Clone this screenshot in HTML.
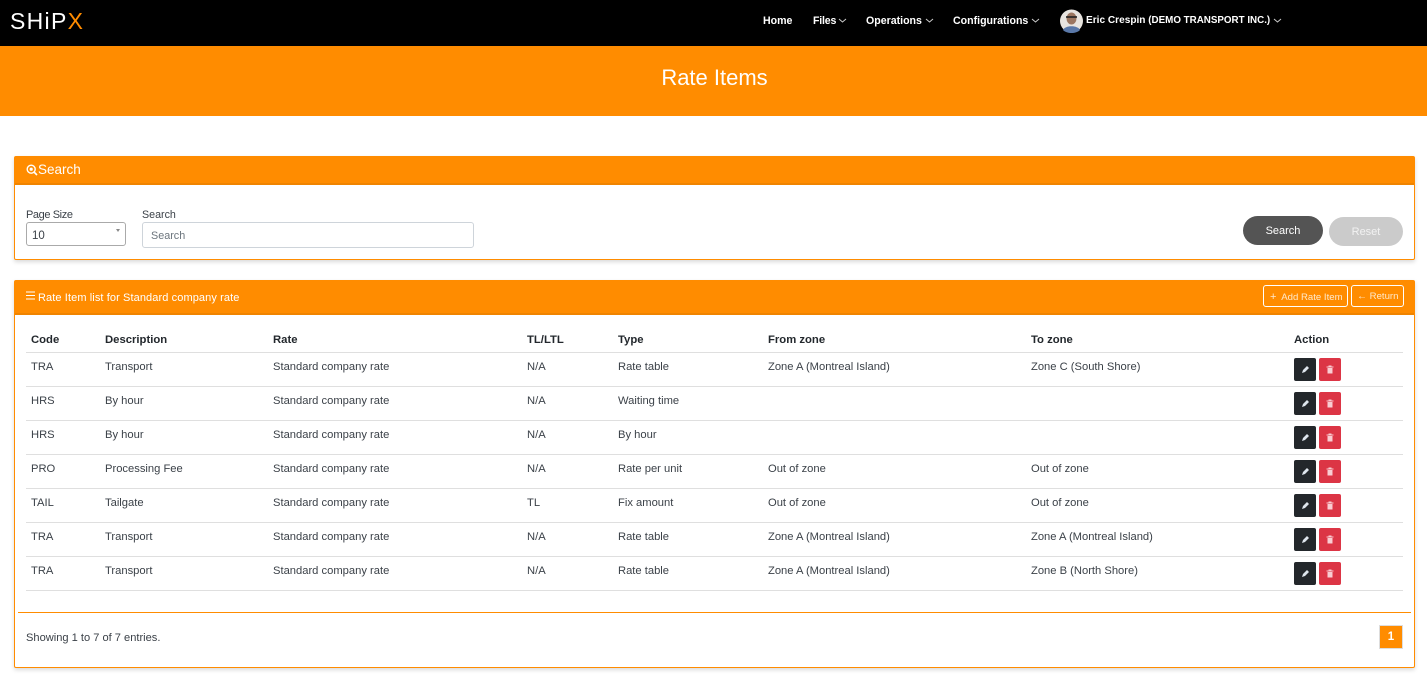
<!DOCTYPE html>
<html><head><meta charset="utf-8"><style>
*{box-sizing:border-box}
html,body{margin:0;padding:0;width:1427px;height:678px;overflow:hidden;background:#fff;font-family:"Liberation Sans",sans-serif;color:#333a40}
.a{position:absolute;white-space:nowrap}
.nav{font-size:10.6px;font-weight:700;color:#fff;top:14px;line-height:14px}
.chev{position:absolute;top:18px}
.card{position:absolute;left:14px;width:1401px;border:1px solid #ff8c00;border-radius:2px;box-shadow:0 2px 4px rgba(0,0,0,.15);background:#fff}
.hd{position:absolute;left:0;top:0;width:100%;background:#ff8c00;border-bottom:2px solid #f08400}
.t{font-size:11.2px;line-height:14px;color:#3b4148;margin-top:1px}
.h{font-size:11.3px;line-height:14px;font-weight:700;color:#23282d;margin-top:1px}
.line{position:absolute;left:26px;width:1377px;height:1px;background:#dfdfdf}
.ed,.del{position:absolute;width:22px;height:23px;border-radius:2px}
.ed{left:1294px;background:#23272b}
.del{left:1319px;background:#dc3545}
.ed svg,.del svg{position:absolute;left:6px;top:6px}
.ob{position:absolute;top:285px;height:22px;border:1px solid #fff;border-radius:3px;color:#ffe9cc;font-size:9.6px;line-height:22px;white-space:nowrap}
</style></head><body>
<div class="a" style="left:0;top:0;width:1427px;height:46px;background:#000"></div>
<div class="a" style="left:10px;top:9px;font-size:23px;line-height:24px;color:#fff;letter-spacing:1.3px">SHiP<span style="color:#ff8c00">X</span></div>
<div class="a nav" style="left:763px">Home</div>
<div class="a nav" style="left:813px;letter-spacing:-.2px">Files</div>
<svg class="chev" style="left:838px" width="9" height="5" viewBox="0 0 9 5"><path d="M1 1l3.500 3L8 1" fill="none" stroke="#ccc" stroke-width="1"/></svg>
<div class="a nav" style="left:866px">Operations</div>
<svg class="chev" style="left:925px" width="9" height="5" viewBox="0 0 9 5"><path d="M1 1l3.500 3L8 1" fill="none" stroke="#ccc" stroke-width="1"/></svg>
<div class="a nav" style="left:953px">Configurations</div>
<svg class="chev" style="left:1031px" width="9" height="5" viewBox="0 0 9 5"><path d="M1 1l3.500 3L8 1" fill="none" stroke="#ccc" stroke-width="1"/></svg>
<svg class="a" style="left:1060px;top:9px" width="23" height="24" viewBox="0 0 23 24"><circle cx="11.500" cy="12" r="11.500" fill="#e8e4df"/><ellipse cx="11.500" cy="9.500" rx="5" ry="6" fill="#9c7660"/><path d="M6 8h11" stroke="#222" stroke-width="1.600"/><path d="M3 21c2-5 15-5 17 0-4 4-13 4-17 0z" fill="#5a78a8"/></svg>
<div class="a nav" style="left:1086px;font-size:10.100px">Eric Crespin <span style="font-size:9.800px">(DEMO TRANSPORT INC.)</span></div>
<svg class="chev" style="left:1273px" width="9" height="5" viewBox="0 0 9 5"><path d="M1 1l3.500 3L8 1" fill="none" stroke="#ccc" stroke-width="1"/></svg>

<div class="a" style="left:0;top:46px;width:1427px;height:70px;background:#ff8c00"></div>
<div class="a" style="left:0;width:1429px;top:65px;text-align:center;font-size:22px;line-height:26px;color:#fff">Rate Items</div>

<div class="card" style="top:156px;height:104px"><div class="hd" style="height:28px"></div></div>
<svg class="a" style="left:26px;top:164px" width="12" height="12" viewBox="0 0 12 12"><circle cx="5.200" cy="5.200" r="4" fill="none" stroke="#fff" stroke-width="1.400"/><circle cx="5.200" cy="5.200" r="1.600" fill="#fff"/><path d="M8 8l3 3" stroke="#fff" stroke-width="1.600"/></svg>
<div class="a" style="left:38px;top:162px;font-size:13.500px;line-height:16px;color:#fff">Search</div>
<div class="a t" style="left:26px;top:207px;font-size:11px;letter-spacing:-.4px">Page Size</div>
<div class="a t" style="left:142px;top:207px;font-size:10.700px">Search</div>
<div class="a" style="left:26px;top:222px;width:100px;height:24px;border:1px solid #aaa;border-radius:3px"></div>
<div class="a t" style="left:32px;top:228px;font-size:11.500px">10</div>
<div class="a" style="left:116px;top:229px;border-left:2px solid transparent;border-right:2px solid transparent;border-top:3px solid #888"></div>
<div class="a" style="left:142px;top:222px;width:332px;height:26px;border:1px solid #ced4da;border-radius:3px"></div>
<div class="a t" style="left:151px;top:228px;color:#6c757d;font-size:10.800px">Search</div>
<div class="a" style="left:1243px;top:216px;width:80px;height:29px;border-radius:15px;background:#545454;color:#fff;font-size:11px;line-height:31px;text-align:center">Search</div>
<div class="a" style="left:1329px;top:217px;width:74px;height:29px;border-radius:15px;background:#cbcbcb;color:#f2f2f2;font-size:11px;line-height:31px;text-align:center">Reset</div>

<div class="card" style="top:280px;height:388px"><div class="hd" style="height:34px"></div></div>
<svg class="a" style="left:26px;top:291px" width="9" height="9" viewBox="0 0 9 9"><path d="M0 1h9M0 4.500h9M0 8h9" stroke="#fff" stroke-width="1"/></svg>
<div class="a" style="left:38px;top:291px;font-size:11px;line-height:14px;color:#fff;letter-spacing:.1px">Rate Item list for Standard company rate</div>
<div class="ob" style="left:1263px;width:85px;padding-left:6px"><span style="font-size:11px">+</span>&nbsp; Add Rate Item</div>
<div class="ob" style="left:1351px;width:53px;padding-left:5px"><span style="font-size:10px">←</span>&nbsp;Return</div>

<div class="a h" style="left:31px;top:332px">Code</div><div class="a h" style="left:105px;top:332px">Description</div><div class="a h" style="left:273px;top:332px">Rate</div><div class="a h" style="left:527px;top:332px">TL/LTL</div><div class="a h" style="left:618px;top:332px">Type</div><div class="a h" style="left:768px;top:332px">From zone</div><div class="a h" style="left:1031px;top:332px">To zone</div><div class="a h" style="left:1294px;top:332px">Action</div>
<div class="line" style="top:352px"></div>

<div class="a t" style="left:31px;top:359px">TRA</div><div class="a t" style="left:105px;top:359px">Transport</div><div class="a t" style="left:273px;top:359px">Standard company rate</div><div class="a t" style="left:527px;top:359px">N/A</div><div class="a t" style="left:618px;top:359px">Rate table</div><div class="a t" style="left:768px;top:359px">Zone A (Montreal Island)</div><div class="a t" style="left:1031px;top:359px">Zone C (South Shore)</div>
<div class="ed" style="top:358px"><svg width="10" height="11" viewBox="0 0 10 11"><path d="M2 9l1-3 4-4 2 2-4 4z" fill="#dfe6ee"/></svg></div><div class="del" style="top:358px"><svg width="10" height="11" viewBox="0 0 10 11"><path d="M1.500 2.500h7v1h-7zM3.500 1.500h3v1h-3zM2.500 4h5v5.500h-5z" fill="#f9cdd2"/></svg></div>
<div class="line" style="top:386px"></div>

<div class="a t" style="left:31px;top:393px">HRS</div><div class="a t" style="left:105px;top:393px">By hour</div><div class="a t" style="left:273px;top:393px">Standard company rate</div><div class="a t" style="left:527px;top:393px">N/A</div><div class="a t" style="left:618px;top:393px">Waiting time</div>
<div class="ed" style="top:392px"><svg width="10" height="11" viewBox="0 0 10 11"><path d="M2 9l1-3 4-4 2 2-4 4z" fill="#dfe6ee"/></svg></div><div class="del" style="top:392px"><svg width="10" height="11" viewBox="0 0 10 11"><path d="M1.500 2.500h7v1h-7zM3.500 1.500h3v1h-3zM2.500 4h5v5.500h-5z" fill="#f9cdd2"/></svg></div>
<div class="line" style="top:420px"></div>

<div class="a t" style="left:31px;top:427px">HRS</div><div class="a t" style="left:105px;top:427px">By hour</div><div class="a t" style="left:273px;top:427px">Standard company rate</div><div class="a t" style="left:527px;top:427px">N/A</div><div class="a t" style="left:618px;top:427px">By hour</div>
<div class="ed" style="top:426px"><svg width="10" height="11" viewBox="0 0 10 11"><path d="M2 9l1-3 4-4 2 2-4 4z" fill="#dfe6ee"/></svg></div><div class="del" style="top:426px"><svg width="10" height="11" viewBox="0 0 10 11"><path d="M1.500 2.500h7v1h-7zM3.500 1.500h3v1h-3zM2.500 4h5v5.500h-5z" fill="#f9cdd2"/></svg></div>
<div class="line" style="top:454px"></div>

<div class="a t" style="left:31px;top:461px">PRO</div><div class="a t" style="left:105px;top:461px">Processing Fee</div><div class="a t" style="left:273px;top:461px">Standard company rate</div><div class="a t" style="left:527px;top:461px">N/A</div><div class="a t" style="left:618px;top:461px">Rate per unit</div><div class="a t" style="left:768px;top:461px">Out of zone</div><div class="a t" style="left:1031px;top:461px">Out of zone</div>
<div class="ed" style="top:460px"><svg width="10" height="11" viewBox="0 0 10 11"><path d="M2 9l1-3 4-4 2 2-4 4z" fill="#dfe6ee"/></svg></div><div class="del" style="top:460px"><svg width="10" height="11" viewBox="0 0 10 11"><path d="M1.500 2.500h7v1h-7zM3.500 1.500h3v1h-3zM2.500 4h5v5.500h-5z" fill="#f9cdd2"/></svg></div>
<div class="line" style="top:488px"></div>

<div class="a t" style="left:31px;top:495px">TAIL</div><div class="a t" style="left:105px;top:495px">Tailgate</div><div class="a t" style="left:273px;top:495px">Standard company rate</div><div class="a t" style="left:527px;top:495px">TL</div><div class="a t" style="left:618px;top:495px">Fix amount</div><div class="a t" style="left:768px;top:495px">Out of zone</div><div class="a t" style="left:1031px;top:495px">Out of zone</div>
<div class="ed" style="top:494px"><svg width="10" height="11" viewBox="0 0 10 11"><path d="M2 9l1-3 4-4 2 2-4 4z" fill="#dfe6ee"/></svg></div><div class="del" style="top:494px"><svg width="10" height="11" viewBox="0 0 10 11"><path d="M1.500 2.500h7v1h-7zM3.500 1.500h3v1h-3zM2.500 4h5v5.500h-5z" fill="#f9cdd2"/></svg></div>
<div class="line" style="top:522px"></div>

<div class="a t" style="left:31px;top:529px">TRA</div><div class="a t" style="left:105px;top:529px">Transport</div><div class="a t" style="left:273px;top:529px">Standard company rate</div><div class="a t" style="left:527px;top:529px">N/A</div><div class="a t" style="left:618px;top:529px">Rate table</div><div class="a t" style="left:768px;top:529px">Zone A (Montreal Island)</div><div class="a t" style="left:1031px;top:529px">Zone A (Montreal Island)</div>
<div class="ed" style="top:528px"><svg width="10" height="11" viewBox="0 0 10 11"><path d="M2 9l1-3 4-4 2 2-4 4z" fill="#dfe6ee"/></svg></div><div class="del" style="top:528px"><svg width="10" height="11" viewBox="0 0 10 11"><path d="M1.500 2.500h7v1h-7zM3.500 1.500h3v1h-3zM2.500 4h5v5.500h-5z" fill="#f9cdd2"/></svg></div>
<div class="line" style="top:556px"></div>

<div class="a t" style="left:31px;top:563px">TRA</div><div class="a t" style="left:105px;top:563px">Transport</div><div class="a t" style="left:273px;top:563px">Standard company rate</div><div class="a t" style="left:527px;top:563px">N/A</div><div class="a t" style="left:618px;top:563px">Rate table</div><div class="a t" style="left:768px;top:563px">Zone A (Montreal Island)</div><div class="a t" style="left:1031px;top:563px">Zone B (North Shore)</div>
<div class="ed" style="top:562px"><svg width="10" height="11" viewBox="0 0 10 11"><path d="M2 9l1-3 4-4 2 2-4 4z" fill="#dfe6ee"/></svg></div><div class="del" style="top:562px"><svg width="10" height="11" viewBox="0 0 10 11"><path d="M1.500 2.500h7v1h-7zM3.500 1.500h3v1h-3zM2.500 4h5v5.500h-5z" fill="#f9cdd2"/></svg></div>
<div class="line" style="top:590px"></div>

<div class="a" style="left:18px;top:612px;width:1393px;height:1px;background:#ff8c00"></div>
<div class="a t" style="left:26px;top:630px;font-size:11.100px">Showing 1 to 7 of 7 entries.</div>
<div class="a" style="left:1379px;top:625px;width:24px;height:24px;background:#ff8c00;border:1px solid #ddd;color:#fff;font-weight:700;font-size:11.500px;line-height:22px;text-align:center">1</div>
</body></html>
